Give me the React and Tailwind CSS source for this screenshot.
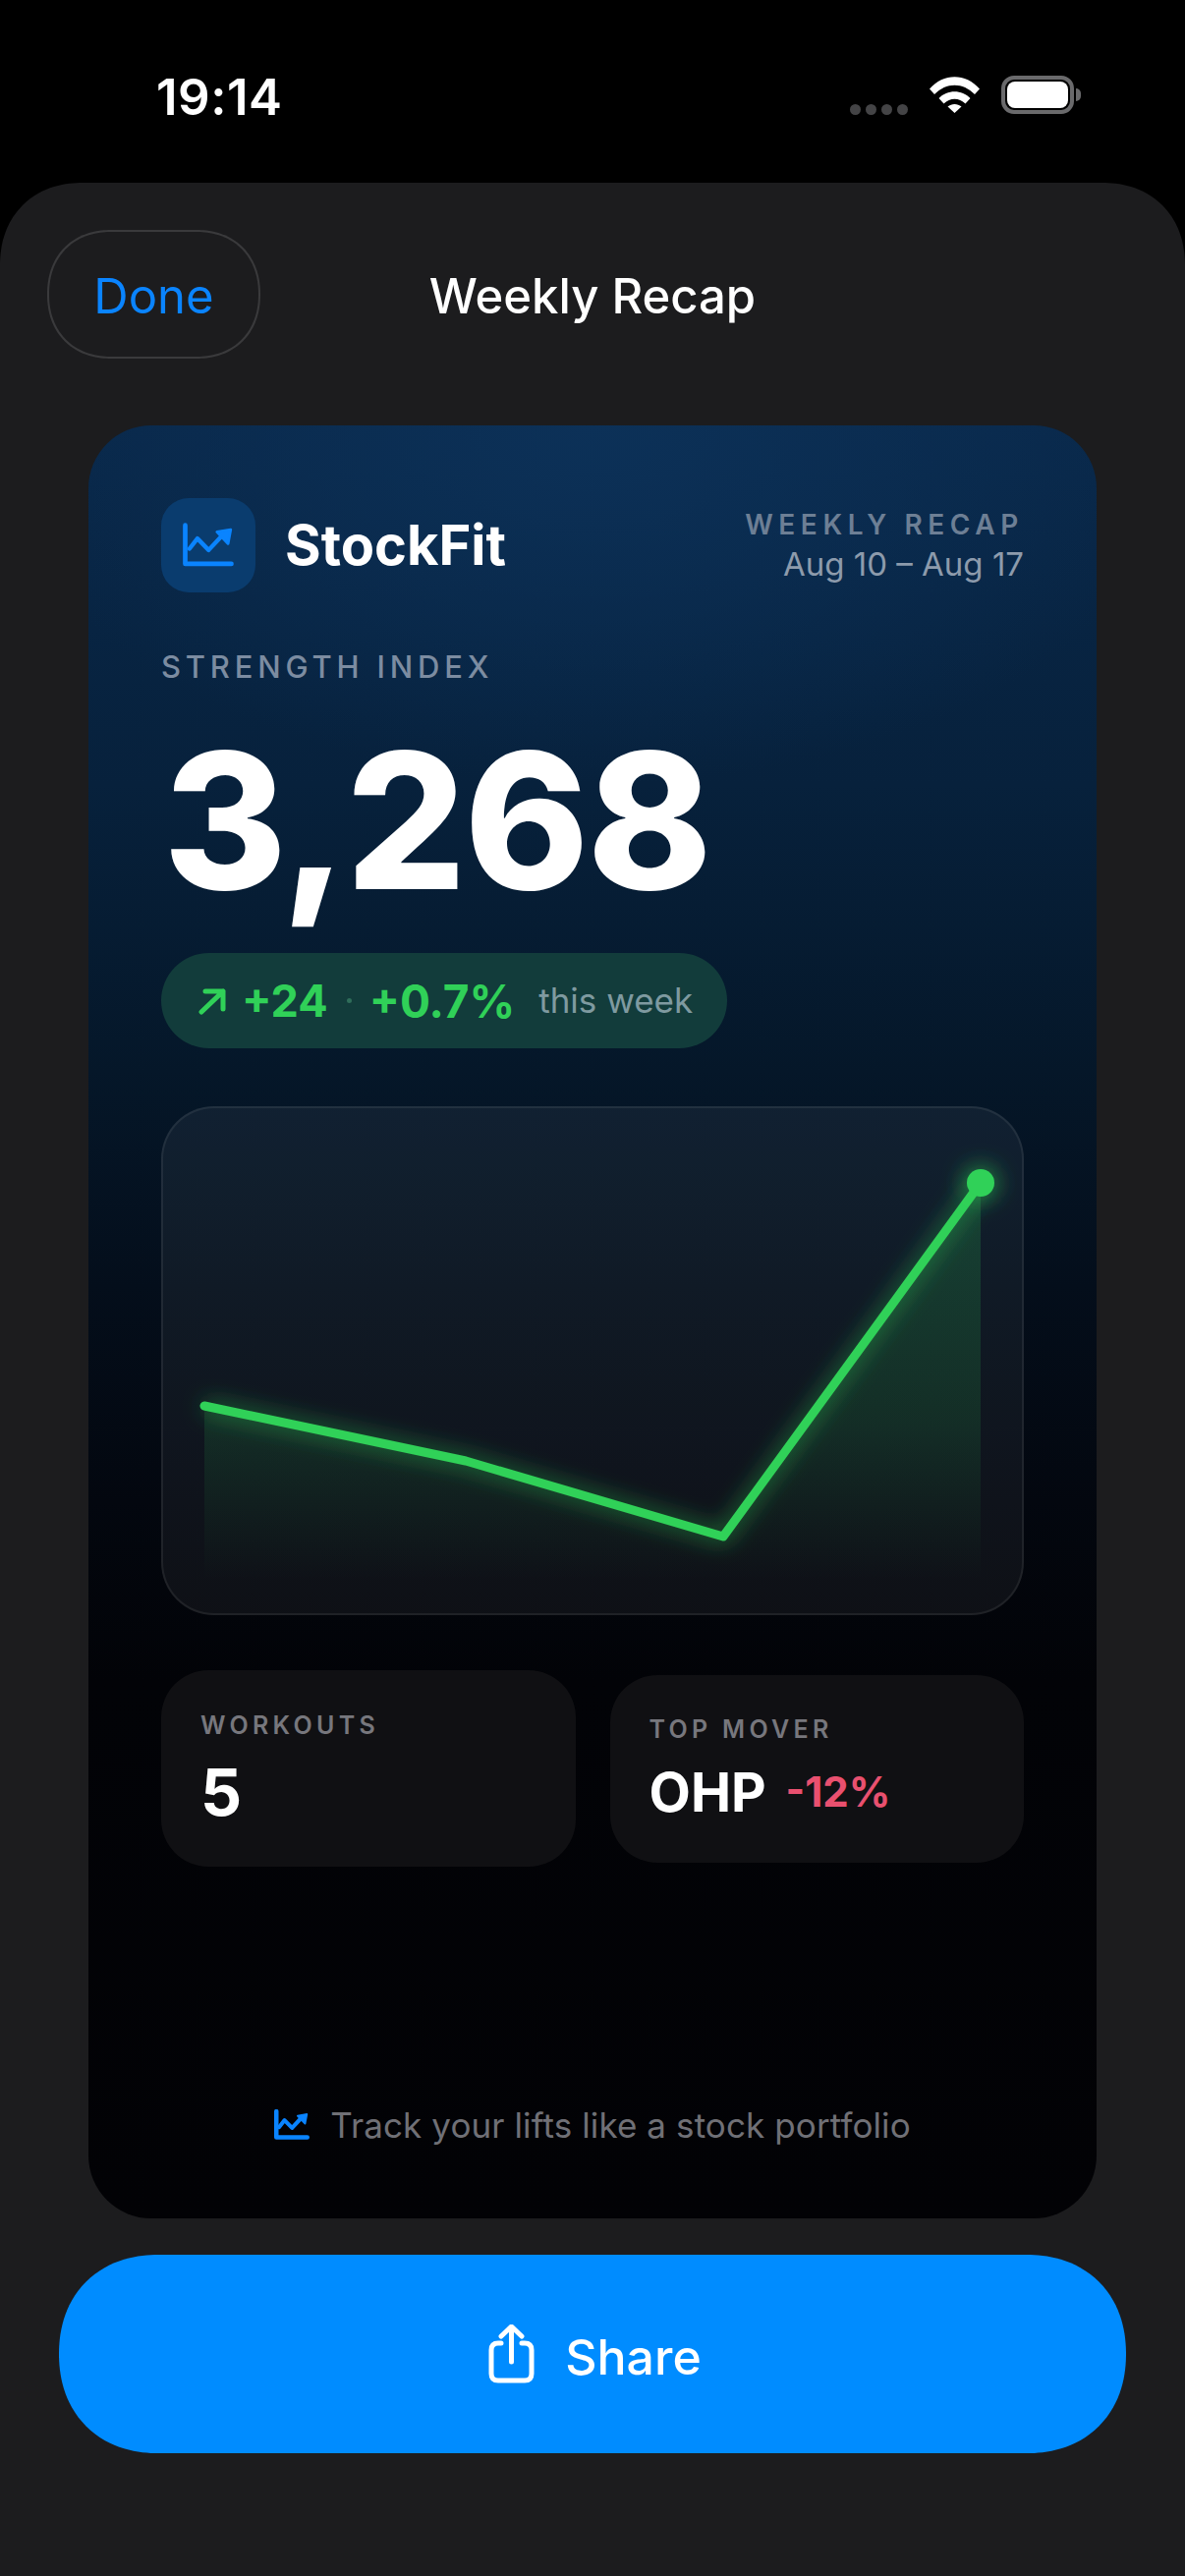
import React from 'react'

const TrendIcon = ({ className, axis = 14, zig = 13 }) => (
    <svg viewBox="105 128 160 140" className={className} fill="none" stroke="currentColor" strokeLinecap="round" strokeLinejoin="round">
        <path d="M115 136 V253 H255" strokeWidth={axis} />
        <path d="M128 207 L152 176 L186 211 L226 168" strokeWidth={zig} />
        <path d="M211 156 L253 149 L245 192 Z" fill="currentColor" strokeWidth="8" />
    </svg>
)

const StatusBar = () => (
    <div className="h-[186px] flex items-start justify-between pl-[159px] pr-[106px] pt-[69px]">
        <span className="text-[51px] leading-[60px] font-semibold text-white tracking-[0.5px]">19:14</span>
        <div className="flex items-start pt-[9px]">
            <div className="flex gap-[5px] mt-[28px] mr-[22px]">
                <span className="w-[11px] h-[11px] rounded-full bg-[#444446]"></span>
                <span className="w-[11px] h-[11px] rounded-full bg-[#444446]"></span>
                <span className="w-[11px] h-[11px] rounded-full bg-[#444446]"></span>
                <span className="w-[11px] h-[11px] rounded-full bg-[#444446]"></span>
            </div>
            <svg viewBox="0 0 51 37" className="w-[51px] h-[37px] mr-[22px]" fill="white">
                <path d="M0 12.5 C14 -4 37 -4 51 12.5 L46 18 C34 5.5 17 5.5 5 18 Z" />
                <path d="M9.500 22 C18 13 33 13 41.500 22 L36.500 27.500 C30 21 21 21 14.500 27.500 Z" />
                <path d="M18.500 30.500 C22.500 27 28.500 27 32.500 30.500 L25.500 37 Z" />
            </svg>
            <div className="w-[74px] h-[39px] -mt-[1px] rounded-[13px] border-[4px] border-[#6a6a6c] p-[2px]">
                <div className="w-full h-full rounded-[8px] bg-white"></div>
            </div>
            <span className="w-[5px] h-[13px] mt-[12px] ml-[2px] rounded-r-full bg-[#6a6a6c]"></span>
        </div>
    </div>
)

const Chart = () => (
    <div className="h-[518px] rounded-[54px] border-2 border-white/[0.07] bg-white/[0.05] mb-[56px]">
        <svg viewBox="0 0 874 514" className="w-full h-full overflow-visible" fill="none">
            <defs>
                <linearGradient id="areaFill" x1="0" y1="0" x2="0" y2="1">
                    <stop offset="0" stopColor="#30d158" stopOpacity="0.2" />
                    <stop offset="0.6" stopColor="#30d158" stopOpacity="0.13" />
                    <stop offset="1" stopColor="#30d158" stopOpacity="0" />
                </linearGradient>
                <filter id="lineGlow" filterUnits="userSpaceOnUse" x="-50" y="-50" width="1000" height="650">
                    <feGaussianBlur stdDeviation="11" />
                </filter>
            </defs>
            <path d="M42 303 L308 359 L570 436 L832 76 V480 H42 Z" fill="url(#areaFill)" />
            <path d="M42 303 L308 359 L570 436 L832 76" stroke="#30d158" strokeOpacity="0.5" strokeWidth="12" strokeLinejoin="round" filter="url(#lineGlow)" />
            <path d="M42 303 L308 359 L570 436 L832 76" stroke="#30d158" strokeWidth="9" strokeLinecap="round" strokeLinejoin="round" />
            <circle cx="832" cy="76" r="18" fill="#30d158" fillOpacity="0.5" filter="url(#lineGlow)" />
            <circle cx="832" cy="76" r="14" fill="#30d158" />
        </svg>
    </div>
)

const App = () => {
    return (
        <div className="w-[1206px] h-[2622px] bg-black flex flex-col font-['Inter',sans-serif] overflow-hidden">
            <StatusBar />
            <div className="flex-1 bg-[#1c1c1e] rounded-t-[84px] [corner-shape:superellipse(1.12)] flex flex-col">
                <div className="grid grid-cols-[1fr_auto_1fr] items-center pl-[48px] pt-[48px] pr-[48px] h-[247px] content-start">
                    <button className="w-[217px] h-[131px] rounded-[65px] [corner-shape:superellipse(1.12)] border-2 border-[#3a3a3c] text-[#0a84ff] text-[49px] leading-none pt-[3px]">Done</button>
                    <h1 className="text-[49px] leading-none font-medium text-white mt-[3px]">Weekly Recap</h1>
                    <div></div>
                </div>

                <div className="mx-[90px] h-[1825px] rounded-[64px] px-[74px] pt-[74px] flex flex-col bg-[radial-gradient(ellipse_60%_20%_at_50%_0%,#0c3158_0%,transparent_100%),linear-gradient(180deg,#09284a_0%,#07213c_20%,#051729_36%,#040e1b_48%,#03070f_60%,#020307_70%,#020205_100%)]">
                    <div className="flex items-start justify-between">
                        <div className="flex items-center gap-[30px]">
                            <div className="w-[96px] h-[96px] rounded-[28px] bg-[#0a3c6e] flex items-center justify-center">
                                <TrendIcon className="w-[54px] h-[47px] text-[#0a84ff]" />
                            </div>
                            <span className="text-[56px] leading-none font-bold text-white">StockFit</span>
                        </div>
                        <div className="text-right pt-[10px]">
                            <div className="text-[28px] leading-[34px] font-semibold tracking-[5.600px] text-[#6d7f95]">WEEKLY RECAP</div>
                            <div className="text-[33px] leading-[38px] mt-[4px] text-[#8d9bac]">Aug 10 – Aug 17</div>
                        </div>
                    </div>

                    <div className="mt-[58px] text-[31px] leading-[36px] font-medium tracking-[4.800px] text-[#7c8ca1]">STRENGTH INDEX</div>
                    <div className="mt-[28px] pl-[2px] text-[192px] leading-[220px] font-extrabold text-white tracking-[-2px]">3,268</div>

                    <div className="mt-[25px] w-[576px] h-[97px] rounded-full bg-[#123c3b] flex items-center pl-[37px]">
                        <svg viewBox="0 0 30 28" className="w-[30px] h-[28px] text-[#30d158]" fill="none" stroke="currentColor" strokeWidth="5" strokeLinecap="round" strokeLinejoin="round">
                            <path d="M4 25 L26 4 M8 4 H26 V22" />
                        </svg>
                        <span className="ml-[15px] text-[45px] leading-none font-bold text-[#30d158]">+24</span>
                        <span className="ml-[19px] w-[5px] h-[5px] rounded-full bg-[#2f6d5a]"></span>
                        <span className="ml-[18px] text-[46px] leading-none font-bold text-[#30d158]">+0.7%</span>
                        <span className="ml-[24px] text-[35px] leading-none text-[#7f9aa0]">this week</span>
                    </div>

                    <div className="mt-[59px]">
                        <Chart />
                    </div>

                    <div className="flex items-center gap-[35px] h-[200px]">
                        <div className="flex-1 h-[200px] rounded-[48px] bg-[#101013] pl-[40px] pt-[41px]">
                            <div className="text-[25px] leading-[30px] font-semibold tracking-[4.300px] text-[#77777d]">WORKOUTS</div>
                            <div className="mt-[18px] text-[66px] leading-[70px] font-bold text-white">5</div>
                        </div>
                        <div className="flex-1 h-[191px] rounded-[48px] bg-[#101013] pl-[40px] pt-[40px]">
                            <div className="text-[25px] leading-[30px] font-semibold tracking-[4.300px] text-[#77777d]">TOP MOVER</div>
                            <div className="mt-[19px] flex items-center gap-[20px]">
                                <span className="text-[55px] leading-[60px] font-bold text-white">OHP</span>
                                <span className="text-[42px] leading-none font-bold text-[#e9506f]">-12%</span>
                            </div>
                        </div>
                    </div>

                    <div className="mt-[241px] flex items-center justify-center gap-[21px] text-[35px] leading-[44px] tracking-[0.1px] text-[#707076]">
                        <TrendIcon className="w-[36px] h-[32px] text-[#0a84ff]" axis={20} zig={18} />
                        <span>Track your lifts like a stock portfolio</span>
                    </div>
                </div>

                <button className="mx-[60px] mt-[37px] h-[202px] rounded-[101px] [corner-shape:superellipse(1.12)] bg-[#008cff] flex items-center justify-center gap-[31px] pl-[5px] text-white">
                    <svg viewBox="0 0 47 60" className="w-[47px] h-[60px]" fill="none" stroke="currentColor" strokeWidth="5" strokeLinecap="round" strokeLinejoin="round">
                        <path d="M13 19 H10 Q3 19 3 26 V50 Q3 57 10 57 H37 Q44 57 44 50 V26 Q44 19 37 19 H34" />
                        <path d="M23.500 38 V3 M13 12 L23.500 2 L34 12" />
                    </svg>
                    <span className="text-[50px] leading-none font-medium mt-[6px]">Share</span>
                </button>
            </div>
        </div>
    )
}

export default App
